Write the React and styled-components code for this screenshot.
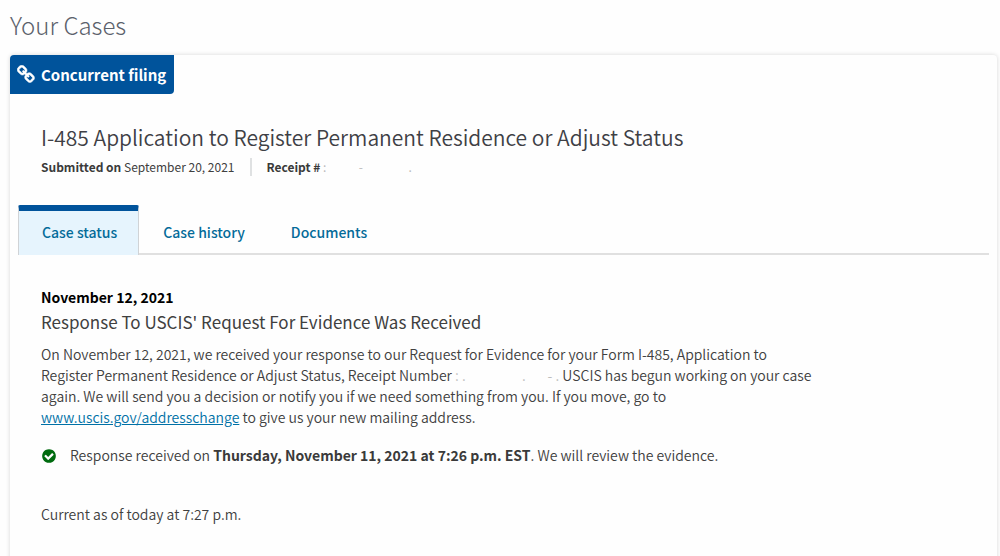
import React, { useState } from 'react';
import styled, { createGlobalStyle } from 'styled-components';

const tabs = ['Case status', 'Case history', 'Documents'];

const App = () => {
  const [activeTab, setActiveTab] = useState('Case status');

  return (
    <>
      <GlobalStyle />
      <Page>
        <PageTitle>Your Cases</PageTitle>
        <Card>
          <Badge>
            <LinkIcon />
            Concurrent filing
          </Badge>

          <CaseHeader>
            <CaseTitle>
              I-485 Application to Register Permanent Residence or Adjust Status
            </CaseTitle>
            <CaseMeta>
              <MetaItem>
                <strong>Submitted on</strong> September 20, 2021
              </MetaItem>
              <MetaItem>
                <strong>Receipt #</strong>{' '}
                <Redacted>{':            -                 .'}</Redacted>
              </MetaItem>
            </CaseMeta>
          </CaseHeader>

          <TabList role="tablist">
            {tabs.map((tab) => (
              <Tab
                key={tab}
                type="button"
                role="tab"
                aria-selected={activeTab === tab}
                $active={activeTab === tab}
                onClick={() => setActiveTab(tab)}
              >
                {tab}
              </Tab>
            ))}
          </TabList>

          <Panel role="tabpanel">
            <StatusDate>November 12, 2021</StatusDate>
            <StatusTitle>
              Response To USCIS' Request For Evidence Was Received
            </StatusTitle>
            <StatusText>
              On November 12, 2021, we received your response to our Request for
              Evidence for your Form I-485, Application to Register Permanent
              Residence or Adjust Status, Receipt Number{' '}
              <Redacted>{': .                  .       - .'}</Redacted>{' '}
              USCIS has begun working on your case again. We will send you a
              decision or notify you if we need something from you. If you move,
              go to{' '}
              <a href="https://www.uscis.gov/addresschange">
                www.uscis.gov/addresschange
              </a>{' '}
              to give us your new mailing address.
            </StatusText>
            <Notice>
              <CheckIcon />
              <p>
                Response received on{' '}
                <strong>Thursday, November 11, 2021 at 7:26 p.m. EST</strong>.
                We will review the evidence.
              </p>
            </Notice>
            <Updated>Current as of today at 7:27 p.m.</Updated>
          </Panel>
        </Card>
      </Page>
    </>
  );
};

export default App;

const LinkIcon = () => (
  <svg width="19" height="19" viewBox="0 0 1792 1792" fill="currentColor" stroke="currentColor" strokeWidth="50" aria-hidden="true">
    <path d="M1456 1216q0-40-28-68l-208-208q-28-28-68-28-42 0-72 32 3 3 19 18.500t21.500 21.500 15 19 13 25.500 3.500 27.500q0 40-28 68t-68 28q-15 0-27.500-3.500t-25.500-13-19-15-21.500-21.500-18.500-19q-33 31-33 73 0 40 28 68l206 207q27 27 68 27 40 0 68-26l147-146q28-28 28-67zm-703-705q0-40-28-68l-206-207q-28-28-68-28-39 0-68 27l-147 146q-28 28-28 67 0 40 28 68l208 208q27 27 68 27 42 0 72-31-3-3-19-18.500t-21.500-21.500-15-19-13-25.500-3.500-27.500q0-40 28-68t68-28q15 0 27.500 3.500t25.500 13 19 15 21.500 21.500 18.500 19q33-31 33-73zm895 705q0 120-85 203l-147 146q-83 83-203 83-121 0-204-85l-206-207q-83-83-83-203 0-123 88-209l-88-88q-86 88-208 88-120 0-204-84l-208-208q-84-84-84-204t85-203l147-146q83-83 203-83 121 0 204 85l206 207q83 83 83 203 0 123-88 209l88 88q86-88 208-88 120 0 204 84l208 208q84 84 84 204z" />
  </svg>
);

const CheckIcon = () => (
  <svg width="16" height="16" viewBox="0 0 1792 1792" fill="#006b0f" aria-hidden="true">
    <path d="M1412 734q0-28-18-46l-91-90q-19-19-45-19t-45 19l-408 407-226-226q-19-19-45-19t-45 19l-91 90q-18 18-18 46 0 27 18 45l362 362q19 19 45 19 27 0 46-19l543-543q18-18 18-45zm252 162q0 209-103 385.500t-279.500 279.500-385.500 103-385.500-103-279.500-279.500-103-385.500 103-385.500 279.500-279.500 385.500-103 385.500 103 279.500 279.500 103 385.500z" />
  </svg>
);

const GlobalStyle = createGlobalStyle`
  * {
    box-sizing: border-box;
  }
  body {
    margin: 0;
    background: #fefefe;
    color: #404040;
    font-family: 'Noto Sans CJK SC', 'Open Sans', sans-serif;
    font-size: 14px;
    font-weight: 350;
    line-height: 21px;
  }
  h1, h2, h3, p {
    margin: 0;
    font-weight: 350;
  }
  strong {
    color: #3a3a3a;
    font-weight: 700;
  }
`;

const Page = styled.main`
  padding: 7px 3px 0 10px;
`;

const PageTitle = styled.h1`
  margin-bottom: 12px;
  color: #5b616b;
  font-size: 24px;
  font-weight: 300;
  line-height: 36px;
`;

const Card = styled.section`
  min-height: 520px;
  border-radius: 4px;
  background: #fefefe;
  box-shadow: 0 0 4px rgba(0, 0, 0, 0.16);
`;

const Badge = styled.div`
  display: inline-flex;
  align-items: center;
  gap: 5px;
  height: 39px;
  padding: 0 8px 0 7px;
  border-radius: 4px 0 4px 0;
  background: #00539b;
  color: #fff;
  font-size: 15px;
  font-weight: 700;
  vertical-align: top;
`;

const CaseHeader = styled.header`
  padding: 28px 31px 0;
`;

const CaseTitle = styled.h2`
  color: #3e4045;
  font-size: 21px;
  line-height: 30px;
`;

const CaseMeta = styled.div`
  display: flex;
  margin-top: 6px;
  font-size: 12px;
  font-weight: 400;
  line-height: 18px;
`;

const MetaItem = styled.span`
  & + & {
    margin-left: 15px;
    padding-left: 15px;
    border-left: 2px solid #dfe1e2;
  }
`;

const Redacted = styled.span`
  display: inline-block;
  color: #bbb;
  white-space: pre;
`;

const TabList = styled.div`
  display: flex;
  margin: 29px 8px 0;
  box-shadow: inset 0 -2px #e0e0e0;
`;

const Tab = styled.button`
  height: 50px;
  padding: 0 21px 3px 23px;
  border: 1px solid transparent;
  border-width: 6px 1px 0;
  border-radius: 2px 2px 0 0;
  background: transparent;
  color: #046b99;
  font-family: inherit;
  font-size: 14px;
  font-weight: 500;
  cursor: pointer;
  ${({ $active }) =>
    $active &&
    `
    border-color: #00539b #d0d3d6 #d0d3d6;
    background: #e6f4fd;
  `}
`;

const Panel = styled.div`
  padding: 32px 31px;
`;

const StatusDate = styled.h3`
  color: #000;
  font-size: 14px;
  font-weight: 700;
`;

const StatusTitle = styled.h3`
  font-size: 17px;
  font-weight: 400;
  line-height: 28px;
`;

const StatusText = styled.p`
  max-width: 776px;
  margin-top: 8px;
  a {
    color: #0071a6;
  }
`;

const Notice = styled.div`
  display: flex;
  align-items: center;
  gap: 13px;
  margin-top: 17px;
`;

const Updated = styled.p`
  margin-top: 38px;
`;
